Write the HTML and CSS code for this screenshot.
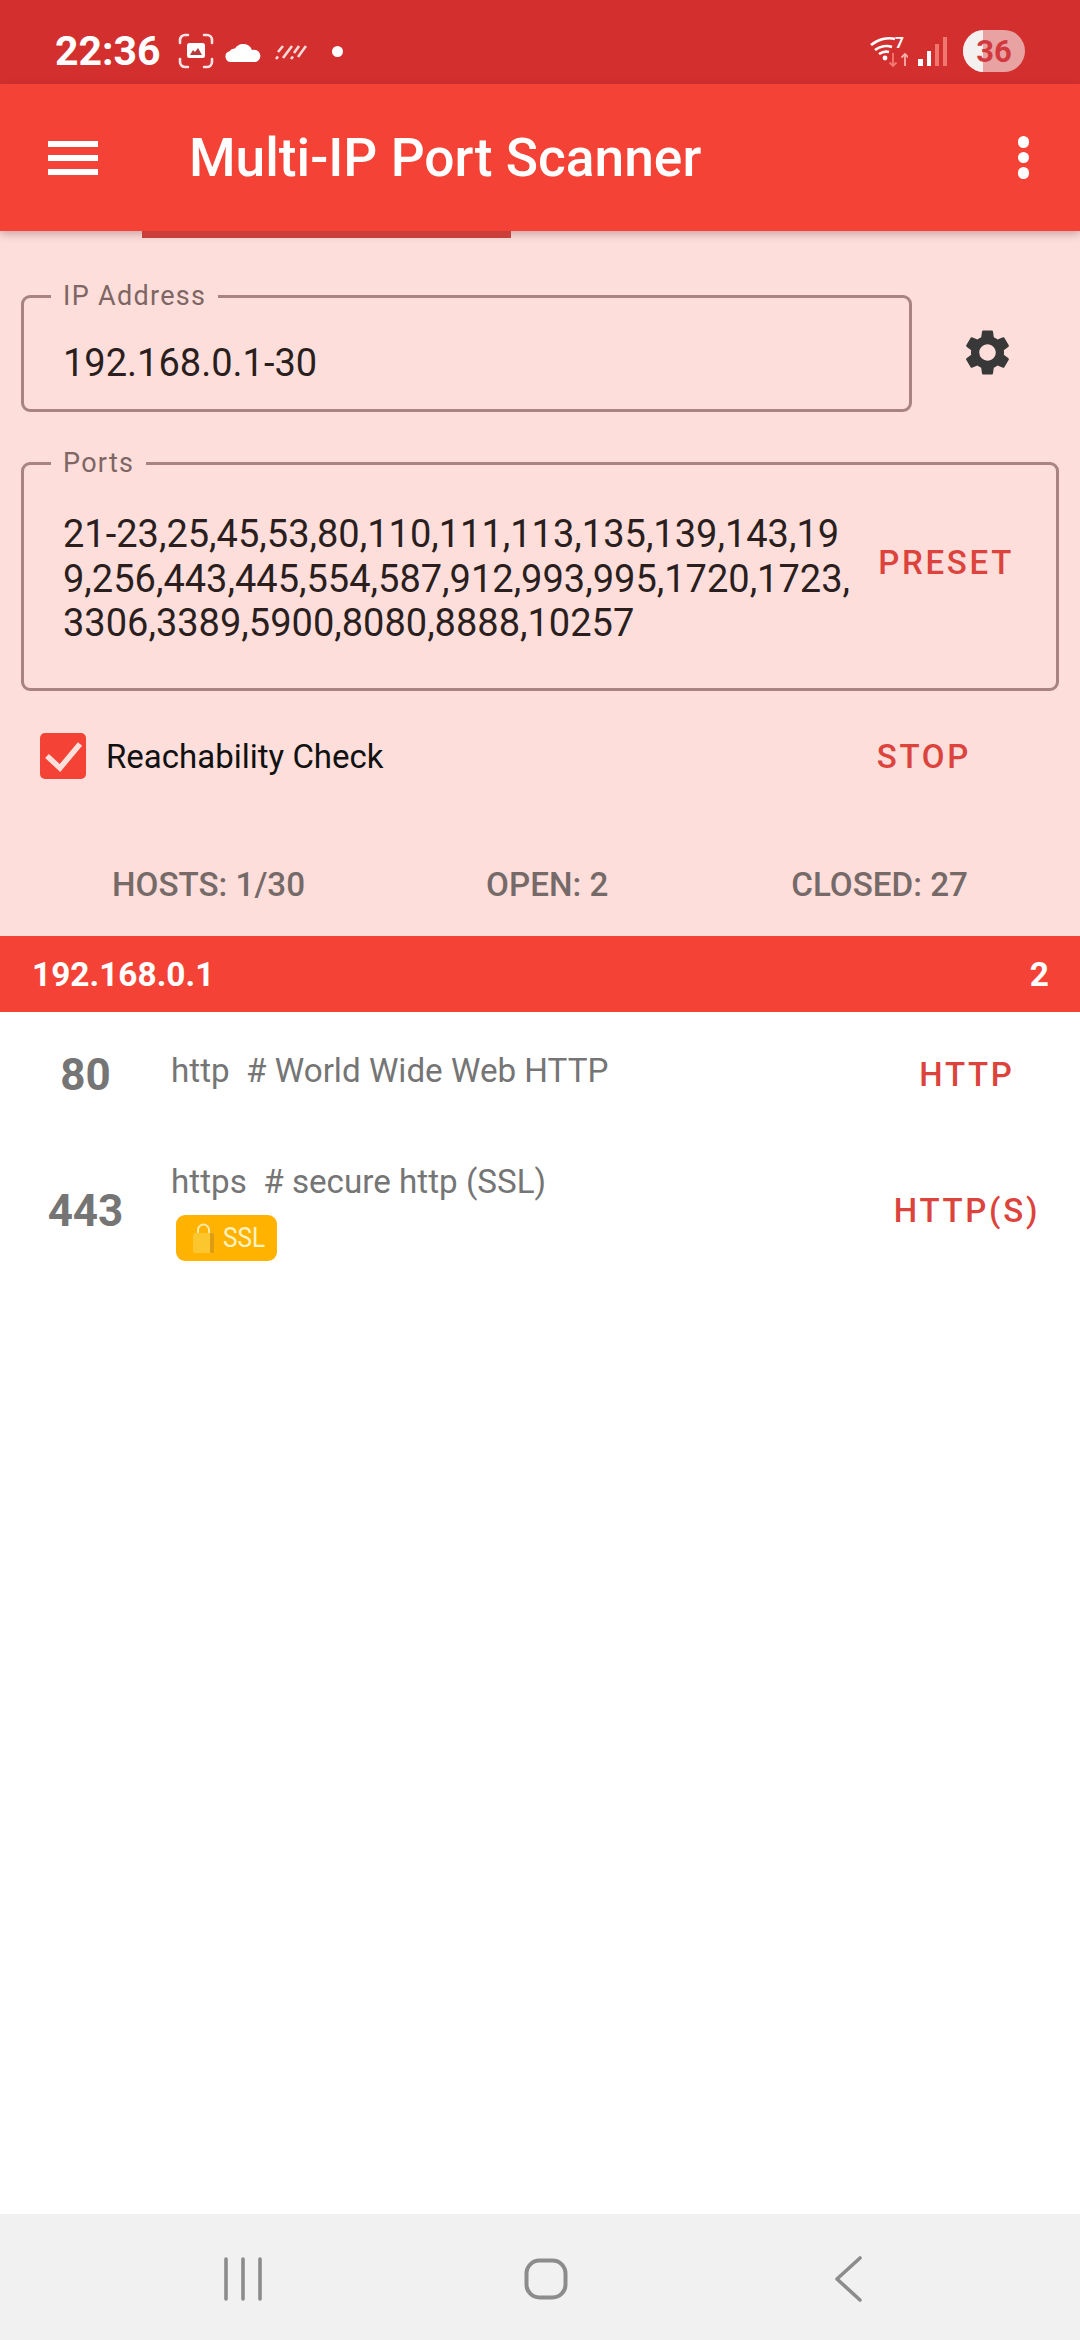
FILE: index.html
```html
<!DOCTYPE html>
<html lang="en">
<head>
  <meta charset="UTF-8" />
  <meta name="viewport" content="width=device-width, initial-scale=1.0"/>
  <title>Multi-IP Port Scanner</title>
  <link rel="stylesheet" href="styles.css">
</head>
<body>
  <!-- Status bar -->
  <div class="status-bar">
    <div class="status-left">
      <span class="clock">22:36</span>
      <svg class="ic-shot" viewBox="0 0 36 36"><path d="M2 10V7a5 5 0 0 1 5-5h3M26 2h3a5 5 0 0 1 5 5v3M34 26v3a5 5 0 0 1-5 5h-3M10 34H7a5 5 0 0 1-5-5v-3" fill="none" stroke="#fbe3e3" stroke-width="2.600" stroke-linecap="round"/><rect x="9" y="10" width="18" height="15" rx="2.500" fill="#fff"/><path d="M12 22l3-5 2 2 3-4 4 7z" fill="#b8393c"/></svg>
      <svg class="ic-cloud" viewBox="0 0 37 21"><path d="M6 21a5.500 5.500 0 0 1-1.500-10.800A6 6 0 0 1 10 7.500a9.500 9.500 0 0 1 17 1.500 6 6 0 0 1 4 12z" fill="#fff"/></svg>
      <svg class="ic-rain" viewBox="0 0 32 18"><path d="M1 17l2-2.500M3 10l5-6M8 16l9-12M16 17l2-2.500M19 11l5-7M23 15l8-11" fill="none" stroke="#fbd9d7" stroke-width="2.600"/></svg>
      <span class="dot"></span>
    </div>
    <div class="status-right">
      <svg class="ic-wifi" viewBox="0 0 40 36"><path d="M3 12C10 6 20 4 27 6M7 17c5-4 12-5 17-3M11 21c3-2 6-3 10-2" fill="none" stroke="#fff" stroke-width="2.600"/><circle cx="17" cy="25" r="2.400" fill="#fff"/><text x="27" y="15" class="wifi-num">7</text><path d="M25 20v13m-3.500-3.500l3.500 3.500 3.500-3.500" fill="none" stroke="#f47a72" stroke-width="1.800"/><path d="M37 33V21m-3.500 3.500l3.500-3.500 3.500 3.500" fill="none" stroke="#f8b0aa" stroke-width="1.800"/></svg>
      <svg class="ic-signal" viewBox="0 0 29 29"><rect x="0" y="22" width="5" height="7" fill="#fff"/><rect x="9" y="14" width="4" height="15" fill="#fff"/><rect x="17" y="7" width="4" height="22" fill="#f0776f"/><rect x="25" y="0" width="4" height="29" fill="#f0776f"/></svg>
      <div class="battery"><span class="battery-fill"></span><span class="battery-num">36</span></div>
    </div>
  </div>

  <!-- Toolbar -->
  <header class="toolbar">
    <div class="menu-btn"><span></span><span></span><span></span></div>
    <h1>Multi-IP Port Scanner</h1>
    <div class="more-btn"><span></span><span></span><span></span></div>
    <div class="tab-line"></div>
  </header>

  <!-- Scan form -->
  <section class="form">
    <div class="ip-row">
      <fieldset class="field field-ip">
        <legend>IP Address</legend>
        <div class="field-text">192.168.0.1-30</div>
      </fieldset>
      <svg class="gear" viewBox="0 0 24 24"><path d="M19.140 12.940c.04-.3.06-.61.06-.94 0-.32-.02-.64-.07-.94l2.030-1.580a.49.49 0 0 0 .12-.61l-1.920-3.320a.488.488 0 0 0-.59-.22l-2.390.96c-.5-.38-1.030-.7-1.620-.94l-.36-2.540a.484.484 0 0 0-.48-.41h-3.840c-.24 0-.43.17-.47.41l-.36 2.540c-.59.24-1.130.57-1.620.94l-2.390-.96c-.22-.08-.47 0-.59.22L2.740 8.870c-.12.21-.08.47.12.61l2.030 1.580c-.05.3-.09.63-.09.94s.02.64.07.94l-2.030 1.580a.49.49 0 0 0-.12.61l1.920 3.320c.12.22.37.29.59.22l2.390-.96c.5.38 1.030.7 1.620.94l.36 2.540c.05.24.24.41.48.41h3.840c.24 0 .44-.17.47-.41l.36-2.540c.59-.24 1.130-.56 1.620-.94l2.390.96c.22.08.47 0 .59-.22l1.920-3.320c.12-.22.07-.47-.12-.61l-2.010-1.580zM12 15.600A3.610 3.610 0 0 1 8.400 12c0-1.980 1.620-3.600 3.600-3.600s3.600 1.620 3.600 3.600-1.620 3.600-3.600 3.600z"/></svg>
    </div>

    <fieldset class="field field-ports">
      <legend>Ports</legend>
      <div class="ports-inner">
        <div class="field-text ports-text">21-23,25,45,53,80,110,111,113,135,139,143,19<br>9,256,443,445,554,587,912,993,995,1720,1723,<br>3306,3389,5900,8080,8888,10257</div>
        <span class="text-btn">PRESET</span>
      </div>
    </fieldset>

    <div class="check-row">
      <label class="check">
        <span class="check-box"><svg viewBox="0 0 46 46"><path d="M7 23l13 12L40 11" fill="none" stroke="#fde0dc" stroke-width="5.500"/></svg></span>
        <span class="check-label">Reachability Check</span>
      </label>
      <span class="text-btn">STOP</span>
    </div>

    <div class="stats">
      <span class="stat-hosts">HOSTS: 1/30</span>
      <span class="stat-open">OPEN: 2</span>
      <span class="stat-closed">CLOSED: 27</span>
    </div>
  </section>

  <!-- Results -->
  <main class="results">
    <div class="host-bar">
      <span>192.168.0.1</span>
      <span>2</span>
    </div>

    <div class="port-row row-http">
      <div class="port-num">80</div>
      <div class="port-info">
        <div class="port-desc">http&nbsp; # World Wide Web HTTP</div>
      </div>
      <span class="text-btn port-btn">HTTP</span>
    </div>

    <div class="port-row row-https">
      <div class="port-num">443</div>
      <div class="port-info">
        <div class="port-desc">https&nbsp; # secure http (SSL)</div>
        <div class="ssl-badge">
          <svg viewBox="0 0 23 30"><path d="M6 11V7a5.500 5.500 0 0 1 11 0v4" fill="none" stroke="#fde9a8" stroke-width="2"/><rect x="1" y="10" width="21" height="20" rx="2" fill="#fcc62e"/><rect x="18" y="10" width="4" height="20" rx="1" fill="#dd9c12"/></svg>
          <span>SSL</span>
        </div>
      </div>
      <span class="text-btn port-btn">HTTP(S)</span>
    </div>
  </main>

  <!-- Navigation bar -->
  <nav class="nav-bar">
    <svg viewBox="0 0 40 44"><path d="M3 2v40M20 2v40M37 2v40" fill="none" stroke="#8c8c8c" stroke-width="3.600" stroke-linecap="round"/></svg>
    <svg viewBox="0 0 44 42"><rect x="2.500" y="2.500" width="39" height="37" rx="13" fill="none" stroke="#8c8c8c" stroke-width="4"/></svg>
    <svg viewBox="0 0 28 46"><path d="M26 2L3 23l23 21" fill="none" stroke="#8c8c8c" stroke-width="3.600" stroke-linecap="round" stroke-linejoin="round"/></svg>
  </nav>
</body>
</html>
```

FILE: styles.css
```css
* {
  box-sizing: border-box;
}

html, body {
  margin: 0;
  height: 100%;
}

body {
  width: 1080px;
  height: 2340px;
  display: flex;
  flex-direction: column;
  font-family: Roboto, "Liberation Sans", sans-serif;
  background: #fff;
  overflow: hidden;
}

/* status bar */
.status-bar {
  height: 84px;
  background: #d32f2f;
  display: flex;
  align-items: center;
  justify-content: space-between;
  padding: 18px 55px 0 55px;
  color: #fff;
}

.status-left, .status-right {
  display: flex;
  align-items: center;
}

.clock {
  font-size: 41px;
  font-weight: 700;
  width: 123px;
}

.ic-shot {
  width: 36px;
  height: 36px;
}

.ic-cloud {
  width: 37px;
  height: 21px;
  margin-left: 11px;
}

.ic-rain {
  width: 32px;
  height: 18px;
  margin-left: 13px;
}

.dot {
  width: 11px;
  height: 11px;
  border-radius: 50%;
  background: #fff;
  margin-left: 25px;
}

.ic-wifi {
  width: 40px;
  height: 36px;
}

.wifi-num {
  font-size: 15.500px;
  font-weight: 700;
  fill: #fff;
  font-family: Roboto, sans-serif;
}

.ic-signal {
  width: 29px;
  height: 29px;
  margin-left: 10px;
}

.battery {
  position: relative;
  width: 62px;
  height: 42px;
  margin-left: 16px;
  border-radius: 21px;
  background: #e8a2a2;
  overflow: hidden;
  display: flex;
  align-items: center;
  justify-content: center;
}

.battery-fill {
  position: absolute;
  left: 0;
  top: 0;
  bottom: 0;
  width: 20px;
  background: #f5f0f0;
}

.battery-num {
  position: relative;
  font-size: 31px;
  font-weight: 700;
  color: #d2393f;
}

/* toolbar */
.toolbar {
  position: relative;
  height: 147px;
  background: #f44336;
  display: flex;
  align-items: center;
  color: #fff;
  box-shadow: 0 3px 8px rgba(90, 30, 30, 0.3);
  z-index: 1;
}

.menu-btn {
  width: 50px;
  margin-left: 48px;
  display: flex;
  flex-direction: column;
  gap: 8px;
}

.menu-btn span {
  height: 6px;
  background: #fff;
}

.toolbar h1 {
  margin: 0 0 0 91px;
  font-size: 53.300px;
  font-weight: 500;
  flex: 1;
}

.more-btn {
  display: flex;
  flex-direction: column;
  gap: 4px;
  margin-right: 51px;
}

.more-btn span {
  width: 11.500px;
  height: 11.500px;
  border-radius: 50%;
  background: #fff;
}

.tab-line {
  position: absolute;
  left: 142px;
  top: 100%;
  width: 369px;
  height: 7px;
  background: #c9403a;
}

/* form */
.form {
  background: #fddedb;
  padding: 50px 21px 0;
  height: 705px;
}

.ip-row {
  display: flex;
  align-items: center;
}

.field {
  margin: 0;
  padding: 0 39px;
  border: 3px solid #a88380;
  border-radius: 9px;
  min-width: 0;
}

.field legend {
  padding: 0 12px;
  margin-left: -12px;
  font-size: 27px;
  letter-spacing: 1.300px;
  line-height: 30px;
  color: #7d6663;
}

.field-ip {
  width: 891px;
  height: 131px;
}

.field-text {
  font-size: 38px;
  color: #2a1f1e;
}

.field-ip .field-text {
  padding-top: 30px;
}

.gear {
  width: 55px;
  height: 55px;
  margin: 12px 0 0 48px;
  fill: #383838;
}

.field-ports {
  margin-top: 36px;
  width: 1038px;
  height: 243px;
}

.ports-inner {
  display: flex;
  align-items: center;
  justify-content: space-between;
  padding-top: 34px;
}

.ports-text {
  line-height: 44.500px;
  white-space: nowrap;
}

.text-btn {
  font-size: 33px;
  font-weight: 500;
  letter-spacing: 2.700px;
  color: #dc433c;
}

.ports-inner .text-btn {
  margin: 0 3px 32px 0;
}

.check-row {
  display: flex;
  align-items: center;
  justify-content: space-between;
  margin-top: 42px;
  padding: 0 88px 0 19px;
}

.check {
  display: flex;
  align-items: center;
}

.check-box {
  width: 46px;
  height: 46px;
  border-radius: 5px;
  background: #f44336;
  display: flex;
}

.check-label {
  margin-left: 20px;
  font-size: 33px;
  color: #111;
}

.stats {
  margin-top: 86px;
  font-size: 33.200px;
  font-weight: 500;
  color: #766a68;
  display: flex;
}

.stat-hosts {
  margin-left: 91px;
}

.stat-open {
  margin-left: 181px;
}

.stat-closed {
  margin-left: 183px;
}

/* results */
.results {
  flex: 1;
}

.host-bar {
  height: 76px;
  background: #f44336;
  color: #fff;
  font-size: 33.400px;
  font-weight: 700;
  display: flex;
  align-items: center;
  justify-content: space-between;
  padding: 0 31px 0 32px;
}

.port-row {
  display: flex;
  align-items: center;
}

.row-http {
  height: 125px;
}

.row-https {
  height: 147px;
}

.port-num {
  width: 171px;
  text-align: center;
  font-size: 44px;
  font-weight: 700;
  color: #757575;
}

.port-info {
  flex: 1;
}

.row-http .port-info {
  margin-top: -8px;
}

.row-https .port-info {
  margin-top: 1px;
}

.port-desc {
  font-size: 33.200px;
  color: #757575;
}

.ssl-badge {
  display: flex;
  align-items: center;
  width: 101px;
  height: 46px;
  margin: 14px 0 0 5px;
  padding-left: 16px;
  background: #ffb300;
  border-radius: 9px;
  color: #fff3c4;
  font-size: 28px;
}

.ssl-badge svg {
  width: 23px;
  height: 30px;
  margin-right: 8px;
  flex: none;
}

.ssl-badge span {
  display: inline-block;
  transform: scaleX(0.87);
  transform-origin: left center;
}

.port-btn {
  width: 178px;
  text-align: center;
  margin-right: 24px;
}

/* nav bar */
.nav-bar {
  height: 126px;
  background: #f1f1f1;
  display: flex;
  align-items: center;
  padding: 4px 0 0 223px;
}

.nav-bar svg:nth-child(1) {
  width: 40px;
  height: 44px;
}

.nav-bar svg:nth-child(2) {
  width: 44px;
  height: 42px;
  margin-left: 261px;
}

.nav-bar svg:nth-child(3) {
  width: 28px;
  height: 46px;
  margin-left: 266px;
}
```
